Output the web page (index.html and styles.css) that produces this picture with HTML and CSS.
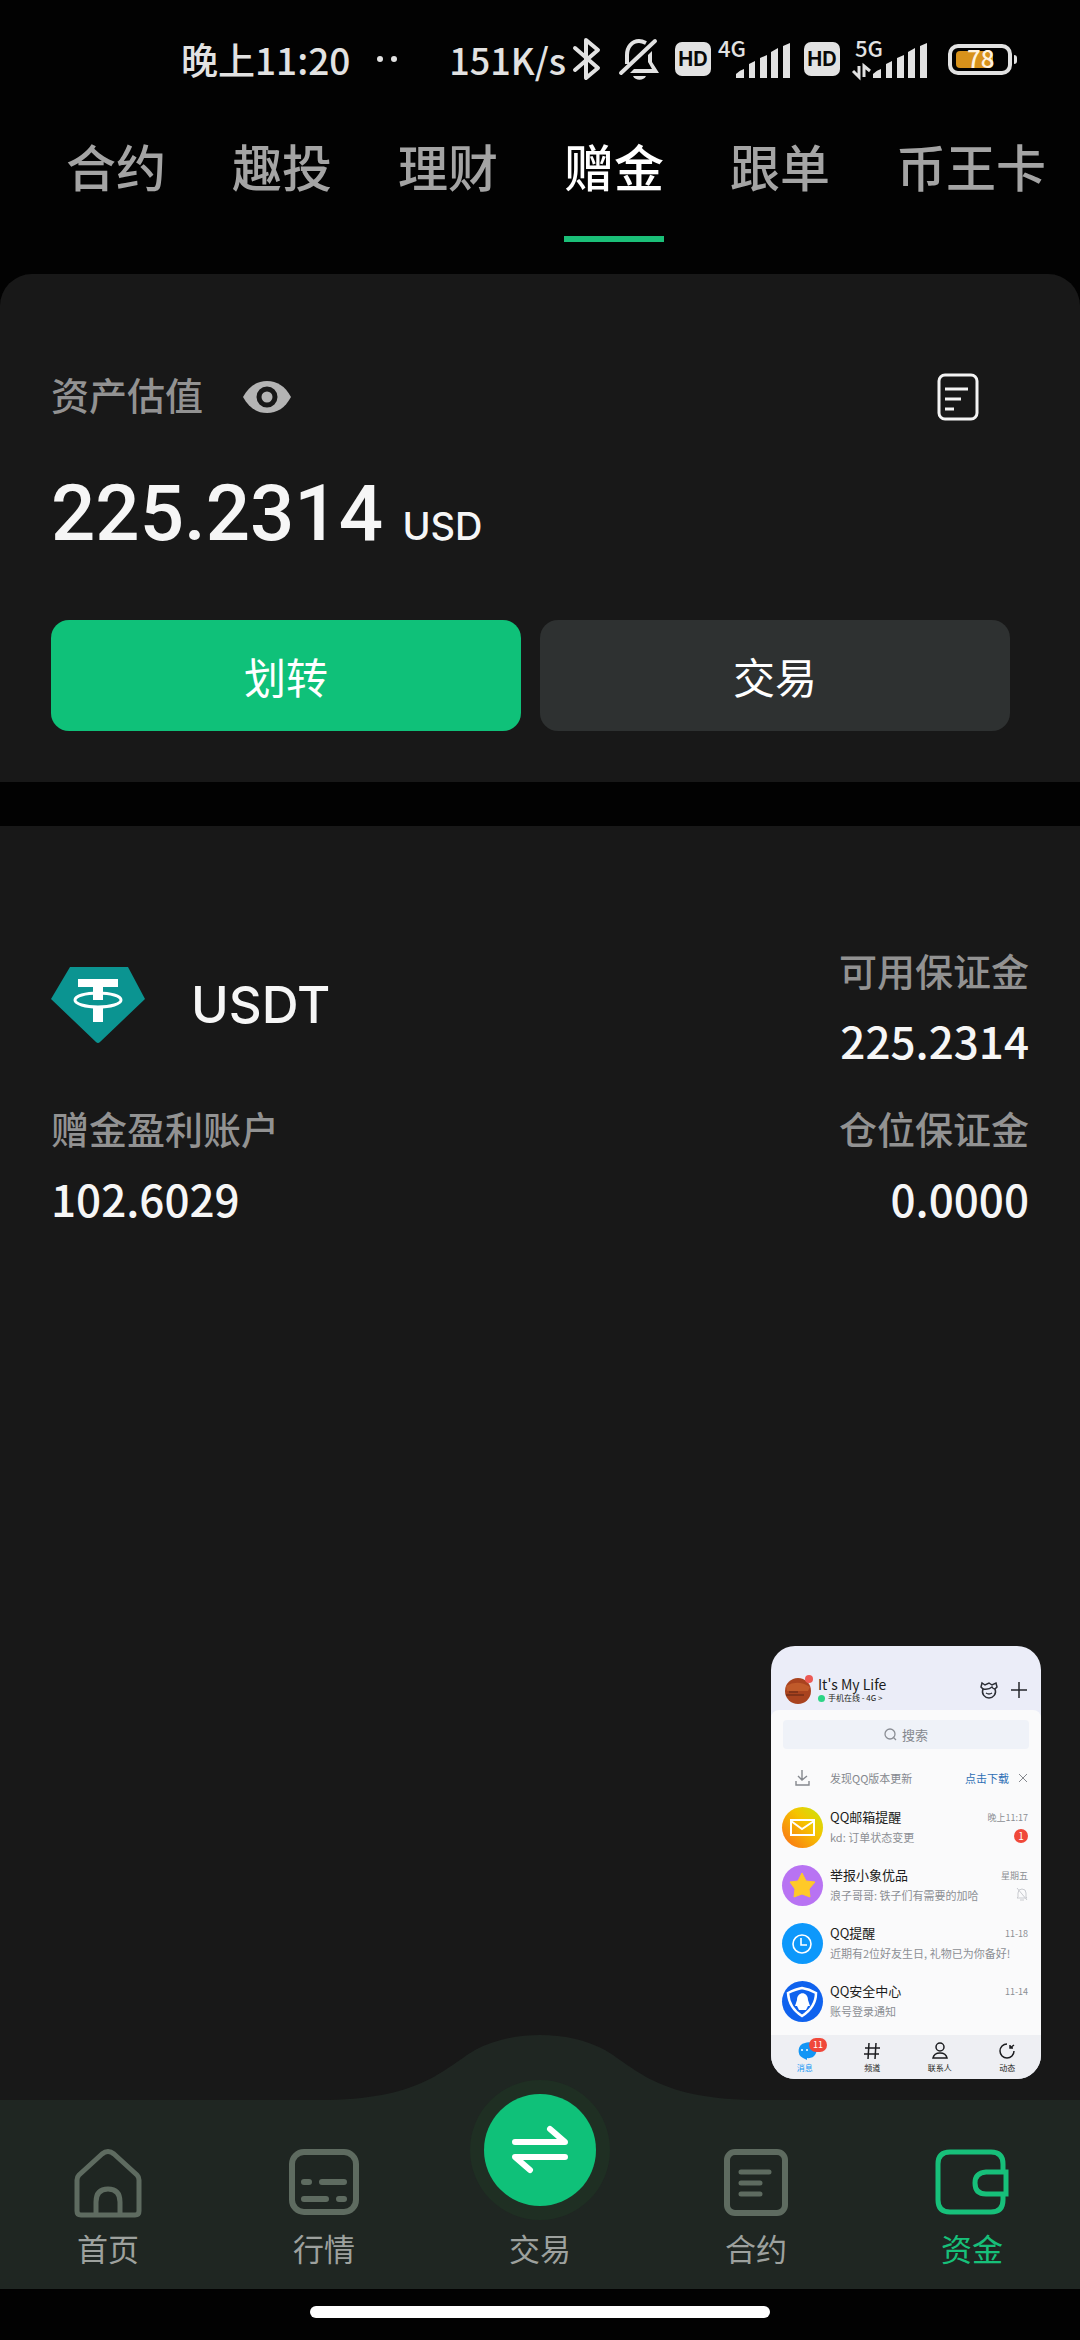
FILE: index.html
```html
<!DOCTYPE html>
<html lang="zh-CN">
<head>
<meta charset="utf-8">
<meta name="viewport" content="width=device-width, initial-scale=1">
<title>资金</title>
<link rel="stylesheet" href="styles.css">
</head>
<body>
<div class="app">
  <div class="status">
    <span class="status-time">晚上11:20</span>
    <svg class="dots" width="20" height="6" viewBox="0 0 20 6" fill="currentColor"><circle cx="3" cy="3" r="3"/><circle cx="17" cy="3" r="3"/></svg>
    <div class="status-icons">
      <div class="status-pair speed">
        <span>151K/s</span>
        <svg width="28" height="44" viewBox="0 0 28 44" fill="none" stroke="currentColor" stroke-width="4" stroke-linejoin="round" stroke-linecap="round"><path d="M2 11 L25 31 L13 41 V3 L25 13 L2 33"/></svg>
      </div>
      <svg width="46" height="44" viewBox="0 0 46 44"><path d="M12 27 V18 C12 10 17 4 24 4 C27 4 29 5 31 6" fill="none" stroke="currentColor" stroke-width="4"/><path d="M33 18 L37 14 V25 L44 36 H15 L19 32 H37 L33 25Z" fill="currentColor"/><path d="M6 36 L40 4" stroke="currentColor" stroke-width="4" stroke-linecap="round"/><path d="M18 39 H31 C29 44 20 44 18 39Z" fill="currentColor"/></svg>
      <div class="status-pair">
        <span class="hd">HD</span>
        <svg width="72" height="40" viewBox="0 0 72 40" fill="currentColor"><text class="net" x="0" y="18">4G</text><path d="M18 39 V35 Q22 31 26 30 V39ZM31 39 V25 L37 22 V39ZM42 39 V19 L49 16 V39ZM53 39 V13 L60 9 V39ZM65 39 V7 L72 4 V39Z"/></svg>
      </div>
      <div class="status-pair">
        <span class="hd">HD</span>
        <svg width="80" height="40" viewBox="0 0 80 40" fill="currentColor"><text class="net" x="8" y="18">5G</text><path d="M26 39 V35 Q30 31 34 30 V39ZM39 39 V25 L45 22 V39ZM50 39 V19 L57 16 V39ZM61 39 V13 L68 9 V39ZM73 39 V7 L80 4 V39Z"/><path d="M12 27 V38 L6 32 M17 38 V27 L23 32" fill="none" stroke="currentColor" stroke-width="3"/></svg>
      </div>
      <svg width="76" height="32" viewBox="0 0 76 32"><rect x="9" y="3" width="60" height="27" rx="8" fill="none" stroke="currentColor" stroke-width="4"/><rect x="15" y="8" width="37" height="17" rx="4" fill="#d8921b"/><path d="M73 12 q3 0 3 3 v3 q0 3 -3 3z" fill="currentColor"/><text class="battery-text" x="26" y="25">78</text></svg>
    </div>
  </div>

  <nav class="tabs">
    <a href="#">合约</a>
    <a href="#">趣投</a>
    <a href="#">理财</a>
    <a href="#" class="active">赠金</a>
    <a href="#">跟单</a>
    <a href="#">币王卡</a>
  </nav>

  <section class="summary">
    <div class="summary-head">
      <span class="label">资产估值</span>
      <button class="icon-button" aria-label="隐藏资产"><svg width="48" height="34" viewBox="0 0 48 34"><path d="M0 17 C6 6 14 1 24 1 C34 1 42 6 48 17 C42 28 34 33 24 33 C14 33 6 28 0 17Z" fill="#b4b4b4"/><circle cx="24" cy="17" r="8" fill="#b4b4b4" stroke="#181818" stroke-width="5"/></svg></button>
      <button class="icon-button records" aria-label="记录"><svg width="42" height="48" viewBox="0 0 42 48" fill="none" stroke="#f4f4f4" stroke-width="3"><rect x="2" y="2" width="38" height="44" rx="6"/><path d="M8 16 H31 M8 26 H24 M8 36 H17"/></svg></button>
    </div>
    <p class="balance">225.2314 <small>USD</small></p>
    <div class="actions">
      <button class="action primary">划转</button>
      <button class="action">交易</button>
    </div>
  </section>

  <main class="assets">
    <div class="asset-grid">
      <div class="coin">
        <svg width="94" height="76" viewBox="0 0 94 76"><path d="M19 0 H77 L94 32 L49 75 Q47 77 45 75 L0 32Z" fill="#0b9491"/><path d="M27 12 H67 V20 H52 V33 H42 V20 H27Z M42 41 H52 V55 H42Z" fill="#fff"/><ellipse cx="47" cy="33" rx="23" ry="7" fill="none" stroke="#fff" stroke-width="3"/></svg>
        <h1>USDT</h1>
      </div>
      <div class="cell end"><span class="label">可用保证金</span><strong>225.2314</strong></div>
      <div class="cell"><span class="label">赠金盈利账户</span><strong>102.6029</strong></div>
      <div class="cell end"><span class="label">仓位保证金</span><strong>0.0000</strong></div>
    </div>

    <aside class="mini">
      <header class="mini-head">
        <svg width="29" height="30" viewBox="0 0 29 30"><circle cx="14" cy="16" r="13" fill="#a9431f"/><path d="M2 11 Q14 4 26 12 L24 16 H3Z" fill="#c05a2a"/><path d="M2 20 H20 M5 17 H14" stroke="#5d2415" stroke-width="1"/><circle cx="25" cy="4" r="4" fill="#ec5a55"/></svg>
        <div class="mini-user"><b>It's My Life</b><span><i class="online"></i>手机在线 - 4G &gt;</span></div>
        <svg width="18" height="18" viewBox="0 0 18 18" fill="none" stroke="#2c2f36" stroke-width="1.5"><path d="M5 4 L2 2 L1 6 L3 8 C1 13 5 17 9 17 C13 17 17 13 15 8 L17 6 L16 2 L12 4 L9 2Z"/><path d="M3 8 Q9 9 12 6 Q13 8 15 8 M6 12 Q9 14 12 12"/></svg>
        <svg width="16" height="16" viewBox="0 0 16 16" stroke="#24262b" stroke-width="1.5"><path d="M8 0 V16 M0 8 H16"/></svg>
      </header>
      <div class="mini-body">
        <div class="mini-search"><svg width="13" height="13" viewBox="0 0 13 13" fill="none" stroke="#8b8e95" stroke-width="1.3"><circle cx="6" cy="6" r="5"/><path d="M9 9 L12 12"/></svg>搜索</div>
        <div class="mini-update">
          <svg width="15" height="16" viewBox="0 0 15 16" fill="none" stroke="#85888e" stroke-width="1.4"><path d="M7 0 V10 M3 6 L7 10 L12 6 M1 11 V15 H14 V11"/></svg>
          <span>发现QQ版本更新</span><a href="#">点击下载</a>
          <svg width="8" height="8" viewBox="0 0 8 8" stroke="#85888e"><path d="M0 0 L8 8 M8 0 L0 8"/></svg>
        </div>
        <ul class="chats">
          <li>
            <svg width="41" height="41" viewBox="0 0 41 41"><defs><linearGradient id="mail" x1="1" y1="0" x2="0" y2="1"><stop offset="0" stop-color="#c5e810"/><stop offset=".4" stop-color="#f5c400"/><stop offset="1" stop-color="#fb6b18"/></linearGradient></defs><circle cx="20.500" cy="20.500" r="20.500" fill="url(#mail)"/><path d="M9 13 H32 V28 H9Z M9 14 L20 22 L32 14" fill="none" stroke="#fff" stroke-width="2"/></svg>
            <div class="chat-text"><b>QQ邮箱提醒</b><span>kd: 订单状态变更</span></div>
            <div class="chat-meta"><time>晚上11:17</time><em>1</em></div>
          </li>
          <li>
            <svg width="41" height="41" viewBox="0 0 41 41"><circle cx="20.500" cy="20.500" r="20.500" fill="#b873f3"/><path d="M20 8 L24 16 L33 17 L27 24 L28 32 L20 29 L12 32 L13 24 L8 17 L16 16Z" fill="#ffc928" stroke="#ffc928" stroke-width="1" stroke-linejoin="round"/></svg>
            <div class="chat-text"><b>举报小象优品</b><span>浪子哥哥: 铁子们有需要的加哈</span></div>
            <div class="chat-meta"><time>星期五</time><svg width="12" height="14" viewBox="0 0 12 14" fill="none" stroke="#c9cbd0"><path d="M2 10 V6 Q2 2 6 2 Q10 2 10 6 V10 L11 11 H1Z M4 13 H8 M1 1 L11 13"/></svg></div>
          </li>
          <li>
            <svg width="41" height="41" viewBox="0 0 41 41"><circle cx="20.500" cy="20.500" r="20.500" fill="#0d98fb"/><circle cx="20" cy="21" r="9" fill="none" stroke="#fff" stroke-width="1.600"/><path d="M19 15 V22 H25" fill="none" stroke="#fff" stroke-width="1.600"/></svg>
            <div class="chat-text"><b>QQ提醒</b><span>近期有2位好友生日, 礼物已为你备好!</span></div>
            <div class="chat-meta"><time>11-18</time></div>
          </li>
          <li>
            <svg width="41" height="41" viewBox="0 0 41 41"><circle cx="20.500" cy="20.500" r="20.500" fill="#0f62ee"/><path d="M6 12 Q14 8 20 7 Q27 8 34 12 Q34 26 20 35 Q7 27 6 12Z" fill="none" stroke="#fff" stroke-width="2.500"/><path d="M15 19 C15 10 26 10 26 19 L28 25 L26 25 L24 29 H17 L15 25 L13 25Z" fill="#fff"/></svg>
            <div class="chat-text"><b>QQ安全中心</b><span>账号登录通知</span></div>
            <div class="chat-meta"><time>11-14</time></div>
          </li>
        </ul>
      </div>
      <div class="mini-tabs">
        <span class="on"><svg width="18" height="18" viewBox="0 0 18 18"><path d="M9 1 A8 8 0 1 1 11 16 L11 18 L7 16 A8 8 0 0 1 9 1Z" fill="#1296f5"/><circle cx="6" cy="8" r="1" fill="#fff"/><circle cx="11" cy="8" r="1" fill="#fff"/></svg>消息<em>11</em></span>
        <span><svg width="18" height="18" viewBox="0 0 18 18" fill="none" stroke="#1c1d20" stroke-width="1.500"><path d="M6 1 L5 17 M13 1 L12 17 M2 6 H17 M1 12 H16"/></svg>频道</span>
        <span><svg width="18" height="18" viewBox="0 0 18 18" fill="none" stroke="#1c1d20" stroke-width="1.500"><circle cx="9" cy="5" r="4"/><path d="M2 16 Q3 11 9 11 Q15 11 16 16Z"/></svg>联系人</span>
        <span><svg width="18" height="18" viewBox="0 0 18 18" fill="none" stroke="#1c1d20" stroke-width="1.500"><path d="M9 2 A7 7 0 1 0 16 9 M12 3 V6 H15 M12 6 L16 3"/></svg>动态</span>
      </div>
    </aside>
  </main>

  <nav class="bottom">
    <svg class="hump" width="440" height="66" viewBox="0 0 440 66"><path d="M0 66 V65 C100 65 122 35 155 15 C192 -5 248 -5 285 15 C318 35 340 65 440 65 V66Z" fill="#1f2622"/></svg>
    <a href="#"><svg width="68" height="70" viewBox="0 0 68 70" fill="none" stroke="currentColor" stroke-width="5" stroke-linejoin="round"><path d="M3 32 Q3 29 5 27 L28 6 Q34 1 40 6 L63 27 Q65 29 65 32 V63 Q65 67 61 67 H7 Q3 67 3 63Z"/><path d="M22 67 V54 Q22 41 34 41 Q46 41 46 54 V67"/></svg>首页</a>
    <a href="#"><svg width="70" height="70" viewBox="0 0 70 70" fill="none" stroke="currentColor" stroke-width="6" stroke-linecap="round"><rect x="3" y="4" width="64" height="60" rx="12"/><path d="M15 34 H20 M33 34 H55 M15 51 H37 M50 51 H55"/></svg>行情</a>
    <a href="#" class="trade"><span class="trade-disc"><svg width="56" height="50" viewBox="0 0 56 50" fill="none" stroke="#fff" stroke-width="6" stroke-linecap="round" stroke-linejoin="round"><path d="M3 17 H53 L38 4 M53 32 H3 L18 45"/></svg></span>交易</a>
    <a href="#"><svg width="66" height="70" viewBox="0 0 66 70" fill="none" stroke="currentColor" stroke-width="6" stroke-linecap="round"><rect x="4" y="4" width="58" height="61" rx="8"/><path d="M18 24 H46 M18 35 H37 M18 46 H37" stroke-width="5"/></svg>合约</a>
    <a href="#" class="active"><svg width="74" height="70" viewBox="0 0 74 70" fill="none" stroke="currentColor" stroke-width="5"><path d="M68 25 V16 Q68 4 56 4 H15 Q3 4 3 16 V52 Q3 64 15 64 H56 Q68 64 68 52 V46"/><path d="M71 24 H51 Q40 25 40 35 Q40 46 51 46 H71Z"/></svg>资金</a>
  </nav>
  <div class="home-bar"><div class="home-pill"></div></div>
</div>
</body>
</html>
```
FILE: styles.css
```css
* { box-sizing: border-box; }

body {
  margin: 0;
  background: #020202;
  color: #f6f6f6;
  font-family: "Noto Sans CJK SC", sans-serif;
}

a { color: inherit; text-decoration: none; }
svg { display: block; flex: none; overflow: visible; }
p, h1, ul { margin: 0; padding: 0; }
button { border: 0; padding: 0; background: none; color: inherit; font: inherit; }

.app {
  display: flex;
  flex-direction: column;
  min-height: 100vh;
}

/* Status bar */
.status {
  display: flex;
  align-items: center;
  height: 118px;
  padding: 0 63px 0 181px;
  color: #e2e2e2;
  font-size: 37px;
  font-weight: 500;
  line-height: 40px;
}
.status-time { white-space: nowrap; }
.dots { margin-left: 27px; }
.status-icons {
  display: flex;
  align-items: center;
  gap: 14px;
  margin-left: auto;
}
.status-pair { display: flex; align-items: center; gap: 7px; }
.speed { font-size: 36px; }
.hd {
  width: 36px;
  height: 34px;
  border-radius: 7px;
  background: #e2e2e2;
  color: #080808;
  font: 700 20px/34px Inter, sans-serif;
  text-align: center;
}
.net { font: 500 22px "Noto Sans CJK SC", sans-serif; }
.battery-text { font: 500 24px "Noto Sans CJK SC", sans-serif; fill: #fff3df; }

/* Category tabs */
.tabs {
  display: flex;
  gap: 66px;
  height: 156px;
  padding-left: 66px;
  overflow: hidden;
  color: #a4a4a4;
  font-size: 50px;
  font-weight: 500;
  line-height: 94px;
  white-space: nowrap;
}
.tabs a { height: 124px; }
.tabs .active { color: #fff; border-bottom: 6px solid #1bbf78; }

/* Balance summary */
.summary {
  padding: 99px 70px 51px 51px;
  border-radius: 32px 32px 0 0;
  background: #181818;
}
.label { color: #929292; font-size: 38px; font-weight: 500; line-height: 48px; }
.summary-head { display: flex; align-items: center; gap: 40px; height: 48px; }
.summary-head .label { align-self: flex-start; line-height: 42px; }
.records { margin: 0 31px 0 auto; }
.balance {
  margin-top: 53px;
  font: 500 78px/80px Roboto, sans-serif;
}
.balance small { font: 500 38px/40px Inter, sans-serif; }
.actions {
  display: grid;
  grid-template-columns: 1fr 1fr;
  gap: 19px;
  margin-top: 66px;
}
.action {
  height: 111px;
  border-radius: 18px;
  background: #2e3131;
  color: #fff;
  font-size: 42px;
  line-height: 60px;
}
.primary { background: #0fc179; }

/* Asset details */
.assets {
  position: relative;
  flex: 1;
  min-height: 900px;
  margin-top: 44px;
  padding: 120px 51px 0;
  background: #181818;
}
.asset-grid {
  display: grid;
  grid-template-columns: 1fr 1fr;
  row-gap: 40px;
}
.coin { display: flex; align-items: center; gap: 46px; }
.coin h1 { font: 500 51px/60px Inter, sans-serif; }
.cell { display: flex; flex-direction: column; gap: 22px; }
.end { align-items: flex-end; }
.cell strong { font-size: 44px; font-weight: 500; line-height: 48px; }

/* Floating window */
.mini {
  position: absolute;
  right: 39px;
  bottom: 21px;
  display: flex;
  flex-direction: column;
  width: 270px;
  height: 433px;
  border-radius: 24px;
  overflow: hidden;
  background: #ebedf8;
  color: #1c1d20;
}
.mini-head {
  display: flex;
  align-items: center;
  gap: 13px;
  height: 64px;
  padding: 24px 14px 0 13px;
}
.mini-user { flex: 1; margin-left: -8px; white-space: nowrap; }
.mini-user b, .mini-user span { display: flex; align-items: center; }
.mini-user b { font-size: 14px; font-weight: 400; line-height: 16px; }
.mini-user span { font-size: 8px; line-height: 12px; }
.online {
  width: 7px;
  height: 7px;
  margin-right: 3px;
  border-radius: 50%;
  background: #2cd585;
}
.mini-body {
  display: flex;
  flex: 1;
  flex-direction: column;
  padding: 10px 12px 0;
  border-radius: 8px 8px 0 0;
  background: #fafafb;
}
.mini-search {
  display: flex;
  align-items: center;
  justify-content: center;
  gap: 5px;
  height: 29px;
  border-radius: 4px;
  background: #eff2f8;
  color: #85888e;
  font-size: 13px;
  line-height: 16px;
}
.mini-update {
  display: flex;
  align-items: center;
  gap: 10px;
  height: 49px;
  padding: 8px 2px 0 12px;
  color: #85888e;
  font-size: 11px;
}
.mini-update span { flex: 1; margin-left: 10px; }
.mini-update a { color: #2f6fb5; }
.chats { list-style: none; }
.chats li { position: relative; display: flex; align-items: center; height: 58px; }
.chats li > svg { margin-left: -1px; }
.chat-text { margin-left: 7px; white-space: nowrap; }
.chat-text b, .chat-text span { display: block; line-height: 20px; }
.chat-text b { font-size: 13px; font-weight: 400; }
.chat-text span { color: #8c8f94; font-size: 11px; }
.chat-meta {
  position: absolute;
  top: 12px;
  right: 1px;
  display: flex;
  flex-direction: column;
  align-items: flex-end;
  gap: 3px;
  color: #8c8f94;
  font-size: 9px;
  line-height: 16px;
}
.chat-meta em {
  width: 14px;
  height: 14px;
  border-radius: 50%;
  background: #f0483a;
  color: #fff;
  font-size: 10px;
  font-style: normal;
  line-height: 14px;
  text-align: center;
}
.mini-tabs { display: flex; height: 44px; background: #eeeff3; }
.mini-tabs span {
  position: relative;
  display: flex;
  flex: 1;
  flex-direction: column;
  align-items: center;
  padding-top: 7px;
  font-size: 8px;
  line-height: 16px;
}
.mini-tabs .on { color: #1296f5; }
.mini-tabs em {
  position: absolute;
  top: 3px;
  left: 38px;
  width: 18px;
  border-radius: 8px;
  background: #f0483a;
  color: #fff;
  font-size: 9px;
  font-style: normal;
  line-height: 14px;
  text-align: center;
}

/* Bottom navigation */
.bottom {
  position: relative;
  display: flex;
  height: 189px;
  background: #1f2622;
  color: #9da19e;
  font-size: 31px;
  line-height: 40px;
}
.hump { position: absolute; bottom: 100%; left: 50%; margin: 0 0 -1px -220px; }
.bottom a {
  position: relative;
  display: flex;
  flex: 1;
  flex-direction: column;
  align-items: center;
  justify-content: flex-end;
  gap: 10px;
  padding-bottom: 21px;
}
.bottom a > svg { color: #5e6b60; }
.bottom .active, .bottom .active > svg { color: #17c07a; }
.trade-disc {
  display: grid;
  flex: none;
  place-items: center;
  width: 112px;
  height: 112px;
  margin-bottom: 12px;
  border-radius: 50%;
  background: #0fc179;
  box-shadow: 0 0 0 14px #1f2f23;
}

.home-bar { display: flex; justify-content: center; height: 51px; padding-top: 17px; }
.home-pill { width: 460px; height: 12px; border-radius: 6px; background: #fff; }
```
